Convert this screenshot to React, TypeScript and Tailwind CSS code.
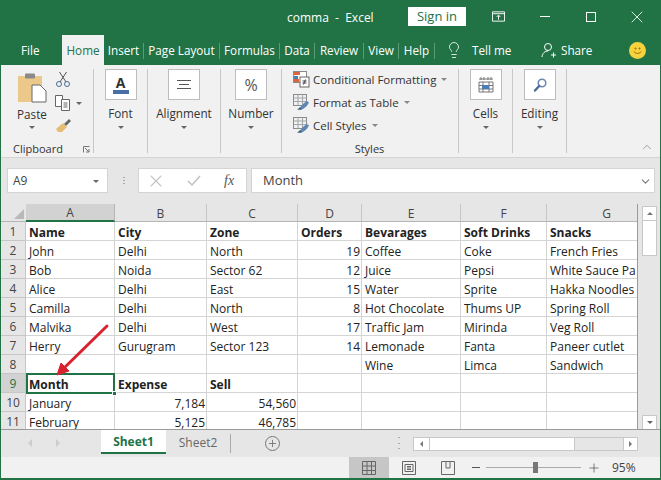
import { ChevronDown, ChevronUp, Lightbulb, Plus, X } from "lucide-react";

const menu = [
  { label: "Insert", w: "w-[40px]" },
  { label: "Page Layout", w: "w-[76px]" },
  { label: "Formulas", w: "w-[60px]" },
  { label: "Data", w: "w-[35px]" },
  { label: "Review", w: "w-[49px]" },
  { label: "View", w: "w-[35px]" },
  { label: "Help", w: "w-[36px]" },
];

const columns = ["A", "B", "C", "D", "E", "F", "G"];

const sheet: { v: string; right?: boolean; bold?: boolean }[][] = [
  [{ v: "Name", bold: true }, { v: "City", bold: true }, { v: "Zone", bold: true }, { v: "Orders", bold: true }, { v: "Bevarages", bold: true }, { v: "Soft Drinks", bold: true }, { v: "Snacks", bold: true }],
  [{ v: "John" }, { v: "Delhi" }, { v: "North" }, { v: "19", right: true }, { v: "Coffee" }, { v: "Coke" }, { v: "French Fries" }],
  [{ v: "Bob" }, { v: "Noida" }, { v: "Sector 62" }, { v: "12", right: true }, { v: "Juice" }, { v: "Pepsi" }, { v: "White Sauce Pa" }],
  [{ v: "Alice" }, { v: "Delhi" }, { v: "East" }, { v: "15", right: true }, { v: "Water" }, { v: "Sprite" }, { v: "Hakka Noodles" }],
  [{ v: "Camilla" }, { v: "Delhi" }, { v: "North" }, { v: "8", right: true }, { v: "Hot Chocolate" }, { v: "Thums UP" }, { v: "Spring Roll" }],
  [{ v: "Malvika" }, { v: "Delhi" }, { v: "West" }, { v: "17", right: true }, { v: "Traffic Jam" }, { v: "Mirinda" }, { v: "Veg Roll" }],
  [{ v: "Herry" }, { v: "Gurugram" }, { v: "Sector 123" }, { v: "14", right: true }, { v: "Lemonade" }, { v: "Fanta" }, { v: "Paneer cutlet" }],
  [{ v: "" }, { v: "" }, { v: "" }, { v: "" }, { v: "Wine" }, { v: "Limca" }, { v: "Sandwich" }],
  [{ v: "Month", bold: true }, { v: "Expense", bold: true }, { v: "Sell", bold: true }, { v: "" }, { v: "" }, { v: "" }, { v: "" }],
  [{ v: "January" }, { v: "7,184", right: true }, { v: "54,560", right: true }, { v: "" }, { v: "" }, { v: "" }, { v: "" }],
  [{ v: "February" }, { v: "5,125", right: true }, { v: "46,785", right: true }, { v: "" }, { v: "" }, { v: "" }, { v: "" }],
];

function Caret({ className = "" }: { className?: string }) {
  return <span className={`inline-block h-0 w-0 border-x-[3px] border-t-[3px] border-x-transparent border-t-[#666] ${className}`} />;
}

function CollapsedGroup({ label, width, children }: { label: string; width: string; children: React.ReactNode }) {
  return (
    <div className={`mt-[4px] flex h-[84px] shrink-0 flex-col items-center border-r border-[#c8c8c8] ${width}`}>
      <div className="flex h-[31px] w-[32px] items-center justify-center border border-[#bdbdbd] bg-white">{children}</div>
      <div className="mt-[5px] text-[11.7px] leading-[16px] text-[#333]">{label}</div>
      <Caret className="mt-[5px]" />
    </div>
  );
}

function StyleRow({ label, icon }: { label: string; icon: React.ReactNode }) {
  return (
    <div className="flex h-[23px] shrink-0 items-center gap-[3px]">
      {icon}
      <span className="text-[11.5px] text-[#333]">{label}</span>
      <Caret className="ml-[2px] border-t-[#888]" />
    </div>
  );
}

function TableIcon({ variant }: { variant: "cond" | "table" | "cell" }) {
  return (
    <svg width="17" height="17" viewBox="0 0 17 17">
      <rect x="0.5" y="0.5" width="13" height="11" fill={variant === "cond" ? "#fff" : "#eef1f5"} stroke="#8a8a8a" />
      {variant === "cond" ? (
        <>
          <rect x="1" y="1" width="6" height="3" fill="#d8663a" />
          <rect x="1" y="5" width="4" height="3" fill="#4c7cb8" />
          <rect x="1" y="8" width="5" height="3" fill="#d8663a" />
          <rect x="7" y="6" width="9" height="10" fill="#fff" stroke="#666" />
          <path d="M9.5 10h4M9.5 12h4M12.5 8.5l-2 5" stroke="#444" fill="none" />
        </>
      ) : (
        <>
          <path d="M0.5 4h13M0.5 7.5h13M5 0.5v11M9.5 0.5v11" stroke="#a5a5a5" fill="none" />
          <path d="M6 16c1-3 3-6 8-9l2 1.5c-2 4-5 6-8 7.5z" fill="#5f86b3" />
          <path d="M4 16l3-3 1.5 2z" fill="#3c5a7d" />
        </>
      )}
    </svg>
  );
}

function ViewIcon({ type }: { type: "normal" | "page" | "break" }) {
  return (
    <svg width="14" height="14" viewBox="0 0 14 14" fill="none" stroke="#666">
      {type === "normal" && <path d="M.5 .5h13v13H.5zM.5 5h13M.5 9.5h13M5 .5v13M9.5 .5v13" />}
      {type === "page" && <path d="M.5 .5h13v13H.5zM3 3.5h8v7H3zM5 5.5h4M5 7h4M5 8.5h4" />}
      {type === "break" && <path d="M.5 .5h13v13H.5zM5 .5v6.500h4V.5" />}
    </svg>
  );
}

export default function App() {
  return (
    <div className="relative flex h-[480px] w-[661px] flex-col overflow-hidden bg-[#217346] font-['Open_Sans',sans-serif]">
      {/* title bar */}
      <div className="flex h-[35px] shrink-0 items-center text-[12px] text-white">
        <div className="ml-[287px] mt-[1px] w-[121px] whitespace-pre">comma  -  Excel</div>
        <div className="mb-[2px] flex h-[19px] w-[58px] items-center justify-center bg-white text-[13px] text-[#217346]">Sign in</div>
        <div className="ml-[26px] mb-[2px] flex w-[13px] justify-center">
          <svg width="14" height="11" viewBox="0 0 14 11" fill="none" stroke="#fff">
            <path d="M.5 .5h13v10H.5zM.5 2.500h13M7 9V4.500M5 6l2-2 2 2" />
          </svg>
        </div>
        <div className="ml-[35px] mb-[2px] h-px w-[10px] bg-white" />
        <div className="ml-[36px] mb-[2px] h-[10px] w-[10px] border border-white" />
        <X className="ml-[31px] mb-[2px]" size={20} strokeWidth={1} />
      </div>

      {/* tabs */}
      <div className="flex h-[30px] shrink-0 items-center text-[11.7px] text-white">
        <div className="ml-[21px] mt-[1px] w-[41px]">File</div>
        <div className="flex h-[30px] w-[42px] items-center justify-center bg-[#f1f1f1] pt-[1px] text-[#217346]">Home</div>
        <div className="mt-[1px] flex items-center">
          {menu.map((m) => (
            <div key={m.label} className={`flex h-[16px] items-center justify-center border-r border-[#5d9a78] ${m.w}`}>
              {m.label}
            </div>
          ))}
        </div>
        <Lightbulb className="ml-[10px]" size={18} strokeWidth={1.1} />
        <div className="ml-[9px] mt-[1px] w-[50px]">Tell me</div>
        <svg className="ml-[19px]" width="16" height="16" viewBox="0 0 16 16" fill="none" stroke="#fff">
          <circle cx="7" cy="5" r="3.5" />
          <path d="M1 15c.5-4 3-6 6-6M10 13h5M12.500 10.500v5" />
        </svg>
        <div className="ml-[4px] mt-[1px] w-[68px]">Share</div>
        <div className="flex h-[17px] w-[17px] items-center justify-center rounded-full bg-[#f7d23c]">
          <svg width="13" height="13" viewBox="0 0 13 13" fill="none" stroke="#8a6a10">
            <circle cx="4.500" cy="4.500" r=".6" />
            <circle cx="8.500" cy="4.500" r=".6" />
            <path d="M3 7.500c1 2.500 6 2.500 7 0" />
          </svg>
        </div>
      </div>

      {/* ribbon */}
      <div className="ml-px mr-px flex h-[93px] shrink-0 border-b border-[#d4d4d4] bg-[#f1f1f1]">
        <div className="mt-[4px] flex h-[84px] w-[93px] shrink-0 flex-col border-r border-[#c8c8c8]">
          <div className="flex h-[65px] shrink-0">
            <div className="ml-[16px] mt-[4px] flex w-[30px] flex-col items-center">
              <svg className="shrink-0" width="30" height="30" viewBox="0 0 30 30">
                <rect x="1" y="3" width="24" height="26" fill="#ecc98b" />
                <rect x="8" y="0.500" width="10" height="5" rx="1" fill="#8a8a8a" />
                <path d="M15 12h8l6 6v11H15z" fill="#fff" stroke="#666" />
              </svg>
              <div className="mt-[3px] text-[11.7px] leading-[16px] text-[#333]">Paste</div>
              <Caret className="mt-[4px]" />
            </div>
            <div className="ml-[8px] mt-[2px] flex w-[28px] flex-col gap-[7px]">
              <svg width="16" height="17" viewBox="0 0 16 17" fill="none" stroke="#4a6c94">
                <circle cx="4" cy="13" r="2.500" />
                <circle cx="12" cy="13" r="2.500" />
                <path d="M5 11L11.500 1M11 11L4.500 1" stroke="#555" />
              </svg>
              <div className="flex items-center gap-[5px]">
                <svg width="16" height="16" viewBox="0 0 16 16" fill="#fff" stroke="#666">
                  <path d="M.5 .5h7v11h-7z" />
                  <path d="M6.500 4.500h8v11h-8zM8.500 8h4M8.500 10h4M8.500 12h4" />
                </svg>
                <Caret />
              </div>
              <svg width="16" height="14" viewBox="0 0 16 14">
                <path d="M9 6l5-5 2 2-5 5z" fill="#666" />
                <path d="M1 11l7-6 4 4-5 5H3z" fill="#e6bd74" />
              </svg>
            </div>
          </div>
          <div className="mt-[7px] flex items-center pl-[12px] pr-[3px] text-[11px] leading-[16px] text-[#333]">
            <span className="flex-1">Clipboard</span>
            <svg width="7" height="7" viewBox="0 0 7 7" fill="none" stroke="#777">
              <path d="M.5 6.500v-6h6M2 2l4 4M6 3v3H3" />
            </svg>
          </div>
        </div>
        <CollapsedGroup label="Font" width="w-[54px]">
          <div className="flex flex-col items-center">
            <span className="text-[14px] font-bold leading-[15px] text-[#333]">A</span>
            <span className="h-[4px] w-[16px] bg-[#4a6fa5]" />
          </div>
        </CollapsedGroup>
        <CollapsedGroup label="Alignment" width="w-[73px]">
          <svg width="14" height="11" viewBox="0 0 14 11" stroke="#555">
            <path d="M0 1.500h14M2 5.500h10M0 9.500h14" />
          </svg>
        </CollapsedGroup>
        <CollapsedGroup label="Number" width="w-[61px]">
          <span className="text-[16px] text-[#555]">%</span>
        </CollapsedGroup>
        <div className="mt-[4px] flex h-[84px] w-[177px] shrink-0 flex-col border-r border-[#c8c8c8] pl-[11px]">
          <div className="-mt-px">
            <StyleRow label="Conditional Formatting" icon={<TableIcon variant="cond" />} />
            <StyleRow label="Format as Table" icon={<TableIcon variant="table" />} />
            <StyleRow label="Cell Styles" icon={<TableIcon variant="cell" />} />
          </div>
          <div className="mt-[4px] pr-[12px] text-center text-[11px] leading-[16px] text-[#333]">Styles</div>
        </div>
        <CollapsedGroup label="Cells" width="w-[54px]">
          <svg width="16" height="17" viewBox="0 0 16 17" fill="none" stroke="#777">
            <path d="M1 3h14M3 1v3M6 1v3M10 1v3M13 1v3M1 6h14v10H1zM1 9.500h14M1 13h14M5 6v10M11 6v10" />
            <rect x="4" y="9" width="7" height="4" fill="#4c7cb8" stroke="none" />
          </svg>
        </CollapsedGroup>
        <CollapsedGroup label="Editing" width="w-[54px]">
          <svg width="16" height="16" viewBox="0 0 16 16" fill="none">
            <circle cx="10" cy="6" r="3.800" stroke="#6a8ab0" strokeWidth="1.600" />
            <path d="M7.200 9L3 13.500" stroke="#4a6c94" strokeWidth="2.400" strokeLinecap="round" />
          </svg>
        </CollapsedGroup>
        <div className="relative flex-1">
          <ChevronUp className="absolute bottom-[3px] right-[6px] text-[#666]" size={14} strokeWidth={1} />
        </div>
      </div>

      {/* formula bar */}
      <div className="mx-px flex h-[46px] shrink-0 items-start bg-[#e6e6e6] pt-[10px] text-[12px] text-[#444]">
        <div className="ml-[6px] flex h-[25px] w-[101px] items-center justify-between border border-[#d4d4d4] bg-white pl-[5px] pr-[8px] pt-[1px]">
          <span>A9</span>
          <Caret />
        </div>
        <div className="ml-[14px] flex h-[25px] w-[3px] flex-col items-center justify-center gap-[2px]">
          <span className="h-[1px] w-[2px] bg-[#aaa]" />
          <span className="h-[1px] w-[2px] bg-[#aaa]" />
          <span className="h-[1px] w-[2px] bg-[#aaa]" />
        </div>
        <div className="ml-[13px] flex h-[25px] w-[109px] items-center border border-[#d4d4d4] bg-white text-[#c4c4c4]">
          <X className="ml-[7px]" size={20} strokeWidth={1.3} />
          <svg className="ml-[21px]" width="14" height="12" viewBox="0 0 14 12" fill="none" stroke="#c0c0c0" strokeWidth="1.500">
            <path d="M1 6l4 4 8-9" />
          </svg>
          <span className="ml-[23px] font-['Liberation_Serif',serif] text-[14px] italic text-[#555]">fx</span>
        </div>
        <div className="ml-[4px] flex h-[25px] w-[404px] items-center justify-between border border-[#d4d4d4] bg-white pl-[11px] pr-[2px] pt-[1px] text-[13px]">
          <span>Month</span>
          <ChevronDown className="text-[#777]" size={13} />
        </div>
      </div>

      {/* sheet + vertical scrollbar */}
      <div className="mx-px flex h-[225px] shrink-0 bg-[#e6e6e6]">
        <div className="h-[225px] w-[637px] shrink-0 overflow-hidden border-r border-[#9a9a9a]">
          <div className="grid grid-cols-[25px_89px_92px_91px_64px_99px_86px_91px] grid-rows-[18px] auto-rows-[19px] text-[12px] leading-[20px] text-[#222]">
            <div className="flex items-end justify-end border-b border-[#b5b5b5] bg-[#e6e6e6] p-[2px]">
              <span className="h-0 w-0 border-b-[10px] border-l-[10px] border-b-[#b9b9b9] border-l-transparent" />
            </div>
            {columns.map((c) => (
              <div
                key={c}
                className={`flex items-center justify-center border-r pt-[2px] text-[#444] ${
                  c === "A"
                    ? "border-b-2 border-r-[#b5b5b5] border-b-[#217346] bg-[#d2d2d2]"
                    : "border-b border-r-[#c6c6c6] border-b-[#b5b5b5] bg-[#e6e6e6]"
                } ${c === "G" ? "pl-[29px]" : ""}`}
              >
                {c}
              </div>
            ))}
            {sheet.map((row, r) => (
              <div key={r} className="contents">
                <div
                  className={`flex items-center justify-center border-b border-r border-[#c6c6c6] pt-[1px] text-[#444] ${
                    r === 8 ? "bg-[#d2d2d2] text-[#217346]" : "bg-[#e6e6e6]"
                  }`}
                >
                  {r + 1}
                </div>
                {row.map((cell, c) => (
                  <div
                    key={c}
                    className={`relative overflow-hidden whitespace-nowrap border-b border-r border-[#d4d4d4] bg-white pt-[1px] ${
                      cell.right ? "pl-[3px] pr-[1px] text-right" : "px-[3px]"
                    } ${cell.bold ? "font-bold" : ""}`}
                  >
                    {cell.v}
                  </div>
                ))}
              </div>
            ))}
          </div>
        </div>
        <div className="ml-[4px] mt-[2px] flex h-[223px] w-[15px] flex-col justify-between">
          <div>
            <div className="flex h-[15px] items-center justify-center border border-[#c8c8c8] bg-white">
              <span className="h-0 w-0 border-x-[3px] border-b-[3px] border-x-transparent border-b-[#777]" />
            </div>
            <div className="h-[35px] border border-t-0 border-[#c8c8c8] bg-white" />
          </div>
          <div className="mb-[-1px] flex h-[15px] items-center justify-center border border-[#c8c8c8] bg-white">
            <Caret />
          </div>
        </div>
      </div>

      {/* sheet tabs */}
      <div className="mx-px flex h-[28px] shrink-0 items-start border-t border-[#9a9a9a] bg-[#e6e6e6] text-[12px] text-[#666]">
        <span className="ml-[27px] mt-[9px] h-0 w-0 border-y-[4px] border-r-[4px] border-y-transparent border-r-[#ccc]" />
        <span className="ml-[24px] mt-[9px] h-0 w-0 border-y-[4px] border-l-[4px] border-y-transparent border-l-[#ccc]" />
        <div className="ml-[41px] flex h-[24px] w-[65px] items-center justify-center border-b-2 border-[#217346] bg-white pt-[2px] font-bold text-[#217346]">Sheet1</div>
        <div className="flex h-[24px] w-[64px] items-center justify-center pt-[2px]">Sheet2</div>
        <div className="mt-[4px] h-[19px] w-px bg-[#aaa]" />
        <div className="ml-[34px] mt-[6px] flex h-[15px] w-[15px] items-center justify-center rounded-full border border-[#777]">
          <Plus className="text-[#777]" size={11} strokeWidth={2} />
        </div>
        <div className="ml-[118px] mt-[7px] flex h-[12px] w-[3px] flex-col justify-between">
          <span className="h-px w-[2px] bg-[#aaa]" />
          <span className="h-px w-[2px] bg-[#aaa]" />
          <span className="h-px w-[2px] bg-[#aaa]" />
        </div>
        <div className="ml-[12px] mt-[7px] flex h-[14px] w-[225px] items-stretch border border-[#c8c8c8]">
          <div className="flex w-[15px] items-center justify-center bg-white">
            <span className="h-0 w-0 border-y-[3px] border-r-[3px] border-y-transparent border-r-[#777]" />
          </div>
          <div className="w-[146px] border-x border-[#c8c8c8] bg-white" />
          <div className="flex-1" />
          <div className="flex w-[14px] items-center justify-center border-l border-[#c8c8c8] bg-white">
            <span className="h-0 w-0 border-y-[3px] border-l-[3px] border-y-transparent border-l-[#777]" />
          </div>
        </div>
      </div>

      {/* status bar */}
      <div className="mx-px mb-[2px] flex h-[21px] shrink-0 items-center bg-[#f1f1f1] text-[12px] text-[#444]">
        <div className="ml-[348px] flex h-[21px] w-[40px] items-center justify-center bg-[#c6c6c6]">
          <ViewIcon type="normal" />
        </div>
        <div className="ml-[13px]"><ViewIcon type="page" /></div>
        <div className="ml-[25px]"><ViewIcon type="break" /></div>
        <div className="ml-[17px] h-px w-[8px] bg-[#555]" />
        <div className="relative ml-[6px] h-px w-[95px] bg-[#aaa]">
          <span className="absolute left-[47px] top-[-5px] h-[11px] w-[5px] bg-[#777]" />
        </div>
        <Plus className="ml-[6px] text-[#555]" size={14} strokeWidth={1.3} />
        <span className="ml-[11px]">95%</span>
      </div>

      {/* selected cell outline and annotation arrow */}
      <div className="pointer-events-none absolute left-[26px] top-[373px] h-[21px] w-[89px] border-2 border-[#217346]">
        <span className="absolute bottom-[-4px] right-[-4px] h-[5px] w-[5px] border border-white bg-[#217346]" />
      </div>
      <svg className="pointer-events-none absolute left-[50px] top-[320px]" width="65" height="60" viewBox="0 0 65 60" fill="none">
        <path d="M57 6L12 50" stroke="#d8222e" strokeWidth="3" strokeLinecap="round" />
        <path d="M7 55L11 43L19 51Z" fill="#d8222e" stroke="#d8222e" />
      </svg>
    </div>
  );
}
